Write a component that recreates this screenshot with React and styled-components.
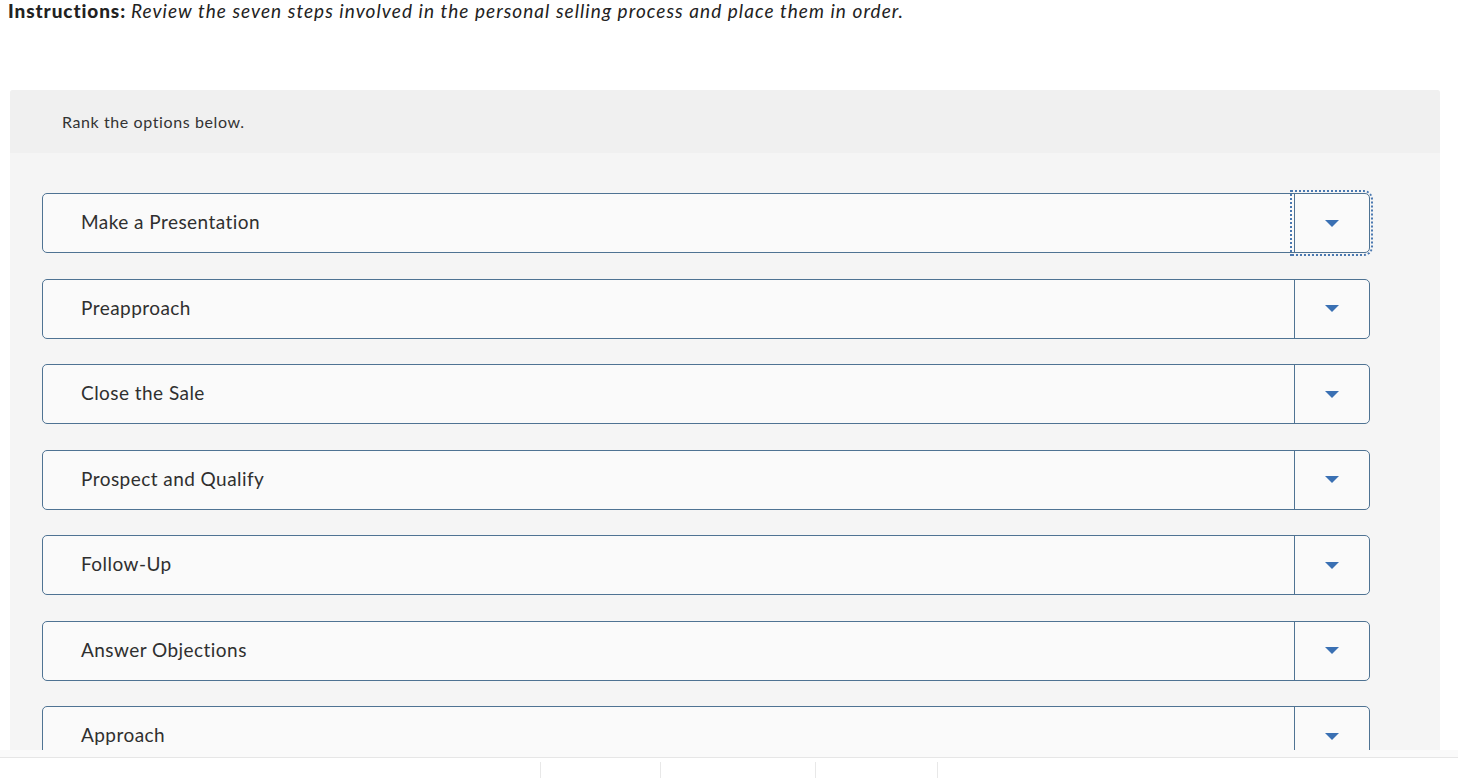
import React from "react";
import styled, { createGlobalStyle } from "styled-components";

const Global = createGlobalStyle`
  html, body { margin: 0; padding: 0; background: #ffffff; }
  body { font-family: "Lato", "Open Sans", sans-serif; color: #333; overflow: hidden; }
`;

const Page = styled.div`
  width: 1458px;
  height: 779px;
  overflow: hidden;
`;

const InstructionClip = styled.div`
  height: 26px;
  overflow: hidden;
`;

const Instruction = styled.p`
  margin: -2px 0 0 0;
  padding-left: 8px;
  font-size: 19px;
  line-height: 26px;
  color: #222;
  white-space: nowrap;
  b { font-weight: 900; letter-spacing: 0.9px; }
  i { font-style: italic; font-weight: 400; letter-spacing: 1.05px; }
`;

const Panel = styled.section`
  margin: 64px 0 0 10px;
  width: 1430px;
  background: #f5f5f5;
  border-radius: 3px 3px 0 0;
  overflow: hidden;
`;

const PanelHeader = styled.div`
  height: 62px;
  padding-bottom: 1px;
  background: #f0f0f0;
  display: flex;
  align-items: center;
  padding-left: 52px;
  font-size: 16px;
  letter-spacing: 0.6px;
  color: #333;
`;

const List = styled.div`
  height: 557px;
  padding: 40px 70px 0 32px;
  overflow: hidden;
  display: flex;
  flex-direction: column;
  gap: 25.5px;
`;

const Row = styled.div`
  flex: none;
  height: 60px;
  box-sizing: border-box;
  display: flex;
  border: 1px solid #4f7393;
  border-radius: 5px;
  background: #fafafa;
`;

const Label = styled.div`
  flex: 1;
  display: flex;
  align-items: center;
  padding: 0 0 3px 38px;
  font-size: 19px;
  letter-spacing: 0.45px;
  color: #2f2f2f;
`;

const Toggle = styled.button`
  width: 75px;
  border: none;
  border-left: 1px solid #4f7393;
  background: transparent;
  border-radius: 0 5px 5px 0;
  display: flex;
  align-items: center;
  justify-content: center;
  padding: 0;
  outline: ${(p) => (p.$focused ? "2px dotted #4a78b0" : "none")};
  outline-offset: 2px;
`;

const Arrow = styled.span`
  width: 0;
  height: 0;
  border-left: 7px solid transparent;
  border-right: 7px solid transparent;
  border-top: 7px solid #3a70b3;
`;

const FooterStrip = styled.div`
  height: 7px;
  background: #fafafa;
  border-bottom: 1px solid #e6e6e6;
`;

const NavRow = styled.div`
  display: flex;
  height: 20px;
  padding-top: 4px;
`;

const Tick = styled.span`
  width: 1px;
  height: 16px;
  background: #e8e8e8;
  margin-left: ${(p) => p.$gap}px;
`;

const items = [
  "Make a Presentation",
  "Preapproach",
  "Close the Sale",
  "Prospect and Qualify",
  "Follow-Up",
  "Answer Objections",
  "Approach",
];

export default function App() {
  return (
    <Page>
      <Global />
      <InstructionClip>
        <Instruction>
          <b>Instructions:</b>{" "}
          <i>Review the seven steps involved in the personal selling process and place them in order.</i>
        </Instruction>
      </InstructionClip>
      <Panel>
        <PanelHeader>Rank the options below.</PanelHeader>
        <List>
          {items.map((t, i) => (
            <Row key={t}>
              <Label>{t}</Label>
              <Toggle $focused={i === 0} aria-label="Move">
                <Arrow />
              </Toggle>
            </Row>
          ))}
        </List>
      </Panel>
      <FooterStrip />
      <NavRow>
        <Tick $gap={540} />
        <Tick $gap={119} />
        <Tick $gap={154} />
        <Tick $gap={121} />
      </NavRow>
    </Page>
  );
}
